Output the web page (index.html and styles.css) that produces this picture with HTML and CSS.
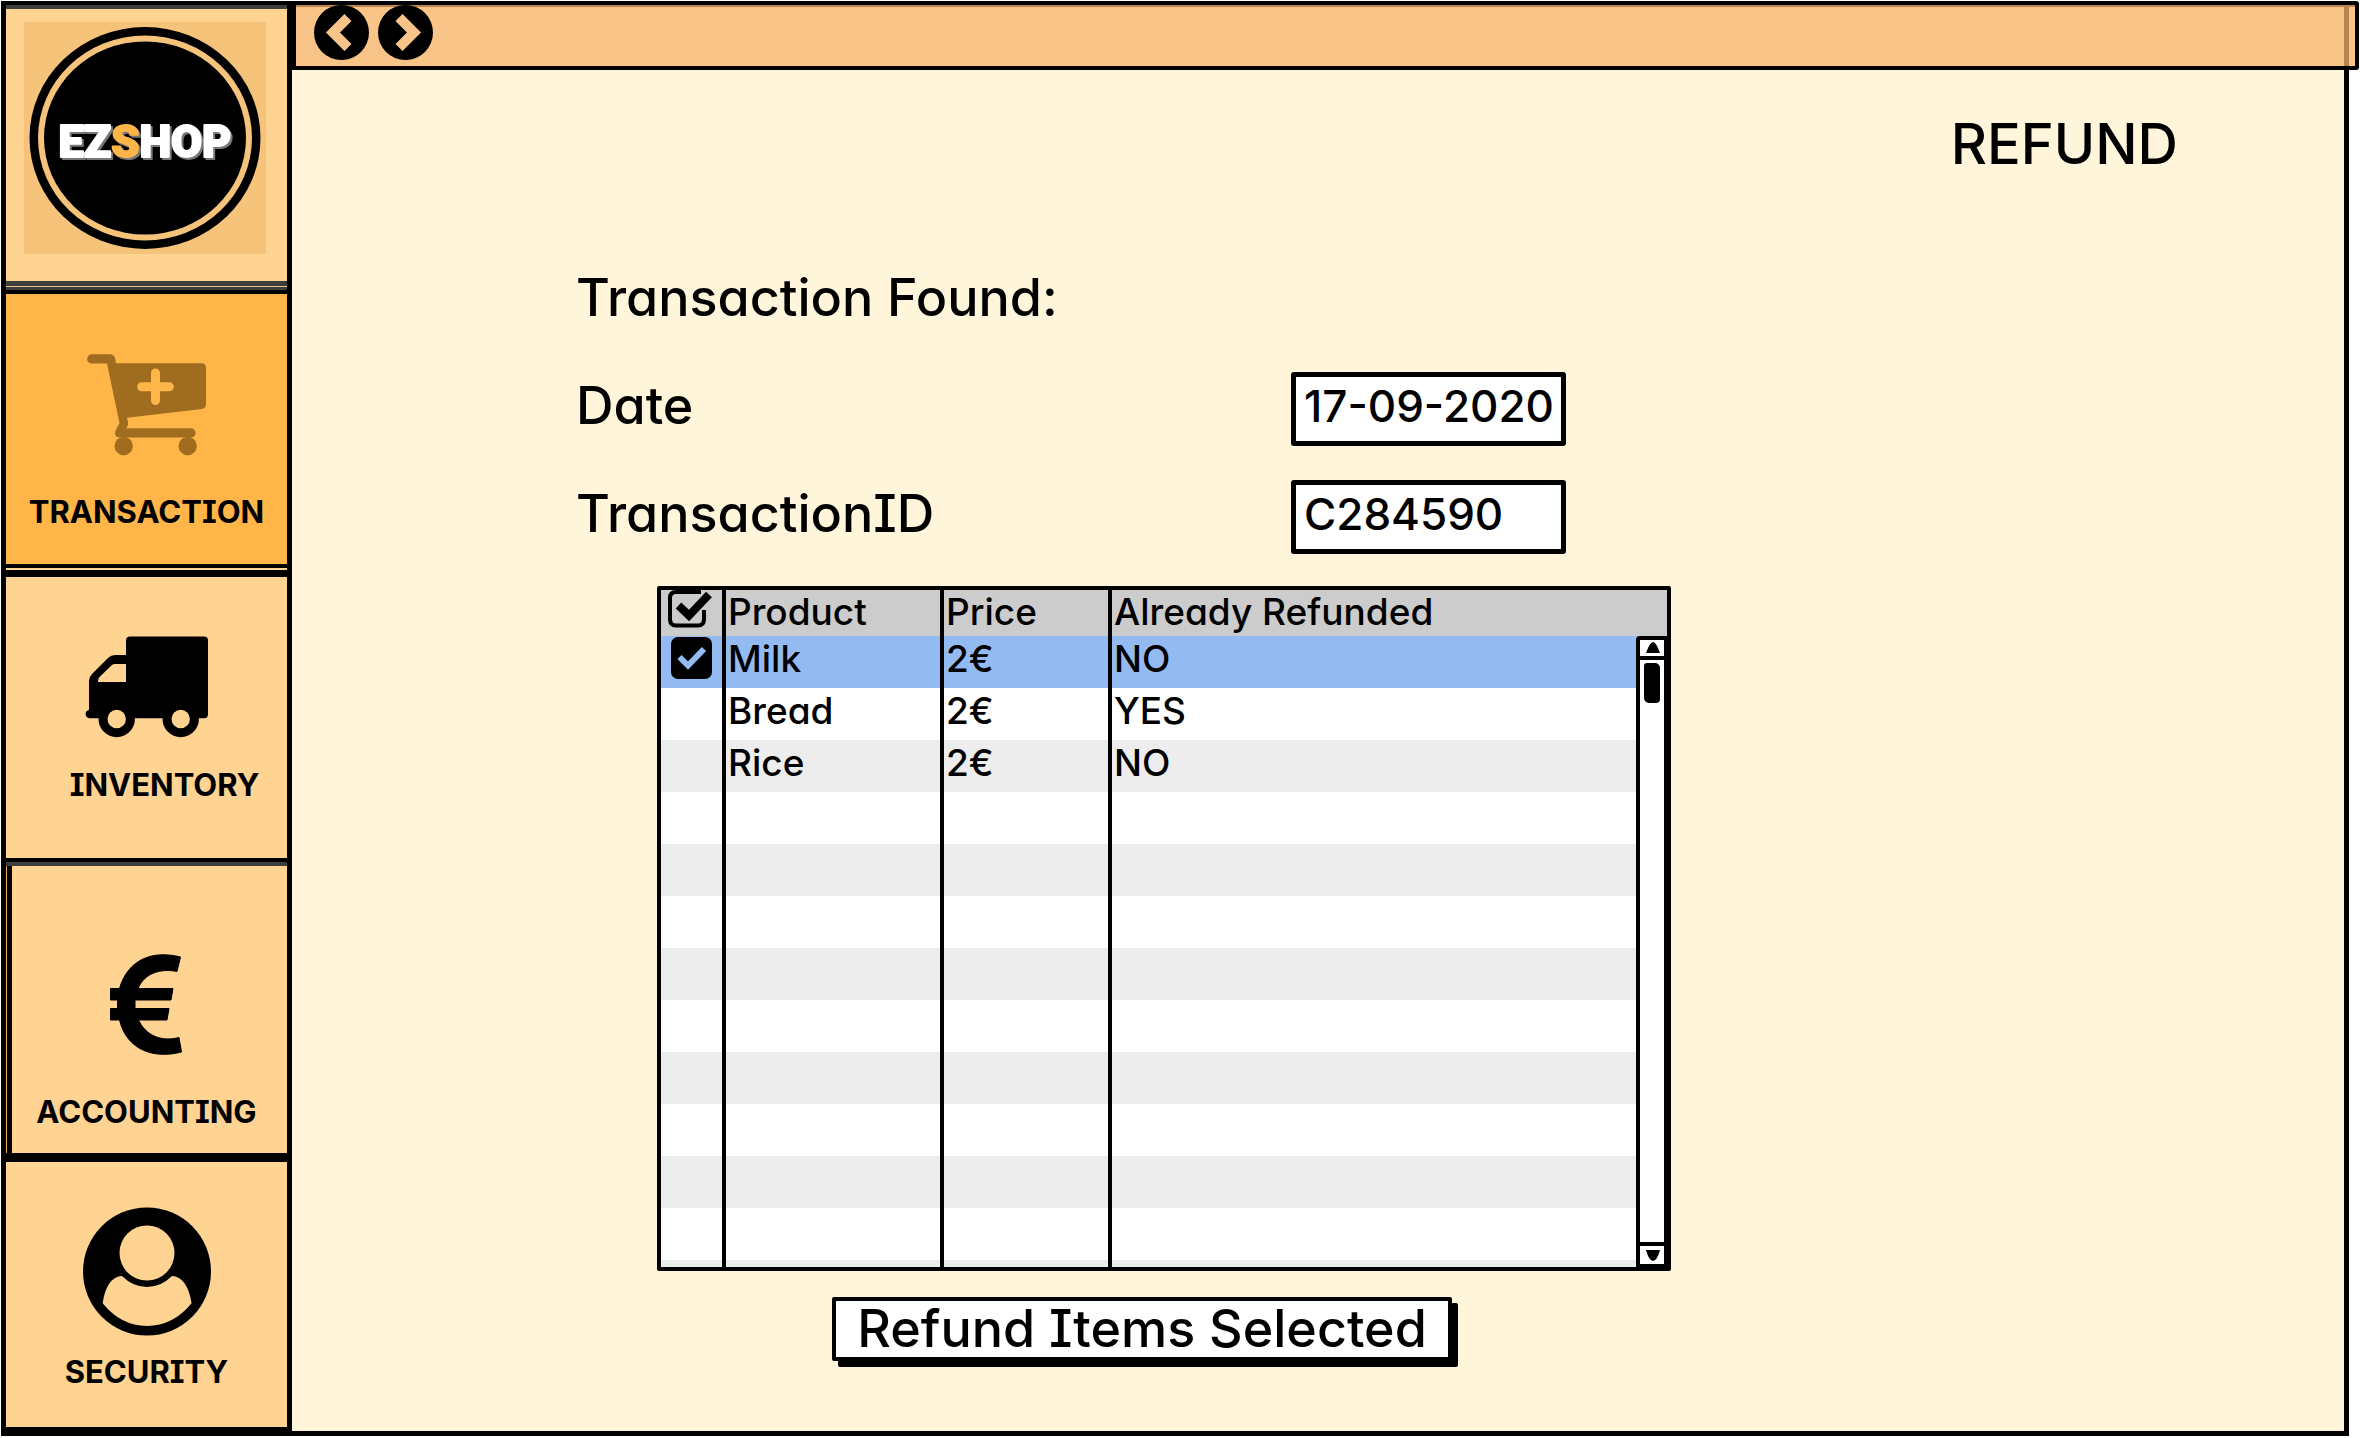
FILE: index.html
```html
<!DOCTYPE html>
<html lang="en">
<head>
<meta charset="utf-8">
<meta name="viewport" content="width=device-width, initial-scale=1">
<title>EZShop - Refund</title>
<link rel="stylesheet" href="styles.css">
</head>
<body>
<div class="app">
  <nav class="sidebar" aria-label="Sections">
    <a class="tile tile-logo" href="#home">
      <svg class="logo" viewBox="0 0 242 232" role="img" aria-label="EZShop">
        <rect width="242" height="232" fill="#f5c37a"/>
        <ellipse cx="121" cy="116" rx="115.5" ry="111" fill="#000"/>
        <ellipse cx="121" cy="116" rx="107" ry="102.5" fill="#f5c37a"/>
        <ellipse cx="121" cy="116" rx="101" ry="96.5" fill="#000"/>
        <text class="logo-text" x="121" y="135" text-anchor="middle">EZ<tspan class="logo-accent">S</tspan>HOP</text>
      </svg>
    </a>
    <a class="tile tile-transaction" href="#transaction" aria-current="page">
      <svg width="120" height="102" viewBox="0 0 120 102" aria-hidden="true">
        <g fill="#a06c20">
          <path d="M4.7 .3H22Q28 .3 28.5 6L29 9.3H114.5Q119 9.3 119 14V50Q119 54.500 115 55L40 63.700 41 68Q41.500 72 39 74.300H104A4.600 4.600 0 0 1 104 83.500H32Q28 83 28 79 28 77 32.500 69L20 9.500H4.700A4.600 4.600 0 0 1 4.700 .3Z"/>
          <circle cx="36.700" cy="92" r="9.200"/>
          <circle cx="100.700" cy="92" r="9.200"/>
        </g>
        <path d="M68.500 19V46.500M54.700 32.700H82.300" stroke="#ffb548" stroke-width="9" stroke-linecap="round"/>
      </svg>
      <span class="tile-label">TRANSACTION</span>
    </a>
    <a class="tile tile-inventory" href="#inventory">
      <svg width="123" height="102" viewBox="0 0 123 102" aria-hidden="true">
        <path d="M45 .5H119Q123 .5 123 4.500V78Q123 82.300 119 82.300H4.500A4.200 4.200 0 0 1 4 74V45Q4 41 7 38L23 22Q26 19 31 19H41V4.500Q41 .5 45 .5Z"/>
        <circle cx="31.700" cy="83" r="18.200"/>
        <circle cx="95.700" cy="83" r="18.200"/>
        <g fill="#ffd391">
          <path d="M41 28H30Q28 28 27 29L14.500 41Q13 42.500 13 46H41Z"/>
          <circle cx="31.700" cy="83" r="9.200"/>
          <circle cx="95.700" cy="83" r="9.200"/>
        </g>
      </svg>
      <span class="tile-label">INVENTORY</span>
    </a>
    <a class="tile tile-accounting" href="#accounting">
      <svg width="73" height="102" viewBox="0 0 73 102" aria-hidden="true">
        <path stroke="#000" stroke-width="1" stroke-linejoin="round" d="M70.500 3 67 17.500C52 14.500 35 18 28 34.500H63L61 46H25V54.500H59L57 66H28.500C36 82 52 88 69 83.500L71.500 98C45 105 17 97 9.500 66H.5V54.500H7.500V46H.5V34.500H9.500C18 5 43 -4 70.500 3Z"/>
      </svg>
      <span class="tile-label">ACCOUNTING</span>
    </a>
    <a class="tile tile-security" href="#security">
      <svg width="128" height="129" viewBox="0 0 128 129" aria-hidden="true">
        <circle cx="64" cy="64.500" r="64"/>
        <g fill="#ffd391">
          <circle cx="64" cy="46" r="27.500"/>
          <path d="M19.700 96.300C22 79 29 69.500 39 69Q50 80 64 80 78 80 89 69C99 69.500 106 79 108.600 96.300Q90 119 64 119 38 119 19.700 96.300Z"/>
        </g>
      </svg>
      <span class="tile-label">SECURITY</span>
    </a>
  </nav>

  <div class="page">
    <header class="topbar">
      <button class="round-button" type="button" aria-label="Back">
        <svg width="55" height="55" viewBox="0 0 55 55" aria-hidden="true"><circle cx="27.500" cy="27.500" r="27.500"/><path d="M34 12.500 19 27.500 34 42.500"/></svg>
      </button>
      <button class="round-button" type="button" aria-label="Forward">
        <svg width="55" height="55" viewBox="0 0 55 55" aria-hidden="true"><circle cx="27.500" cy="27.500" r="27.500"/><path d="M21 12.500 36 27.500 21 42.500"/></svg>
      </button>
    </header>

    <main class="content">
      <h1 class="title">REFUND</h1>
      <form class="refund">
        <h2 class="line">Transaction Found:</h2>
        <div class="field">
          <label class="line" for="date">Date</label>
          <input class="box" id="date" type="text" value="17-09-2020">
        </div>
        <div class="field">
          <label class="line" for="tid">TransactionID</label>
          <input class="box" id="tid" type="text" value="C284590">
        </div>

        <div class="list">
          <table class="items">
            <colgroup><col class="col-check"><col class="col-product"><col class="col-price"><col></colgroup>
            <thead>
              <tr>
                <th class="mark">
                  <button class="select-all" type="button" aria-label="Select all">
                    <svg width="46" height="38" viewBox="0 0 46 38" aria-hidden="true">
                      <path d="M33 2H8Q2 2 2 8V29Q2 35.500 8 35.500H30Q36 35.500 36 29V20" fill="none" stroke="#000" stroke-width="4"/>
                      <path d="M10.500 15.500 21 25.500 41 4.500" fill="none" stroke="#000" stroke-width="8"/>
                    </svg>
                  </button>
                </th>
                <th>Product</th><th>Price</th><th>Already Refunded</th>
              </tr>
            </thead>
            <tbody>
              <tr class="selected">
                <td class="mark">
                  <span class="tick">
                    <input type="checkbox" checked aria-label="Refund Milk">
                    <svg width="41" height="42" viewBox="0 0 41 42" aria-hidden="true"><path d="M8.500 20 17 28.500 33 12" fill="none" stroke="#94baf2" stroke-width="6"/></svg>
                  </span>
                </td>
                <td>Milk</td><td>2€</td><td>NO</td>
              </tr>
              <tr><td></td><td>Bread</td><td>2€</td><td>YES</td></tr>
              <tr><td></td><td>Rice</td><td>2€</td><td>NO</td></tr>
              <tr><td></td><td></td><td></td><td></td></tr>
              <tr><td></td><td></td><td></td><td></td></tr>
              <tr><td></td><td></td><td></td><td></td></tr>
              <tr><td></td><td></td><td></td><td></td></tr>
              <tr><td></td><td></td><td></td><td></td></tr>
              <tr><td></td><td></td><td></td><td></td></tr>
              <tr><td></td><td></td><td></td><td></td></tr>
              <tr><td></td><td></td><td></td><td></td></tr>
              <tr><td></td><td></td><td></td><td></td></tr>
              <tr class="partial"><td></td><td></td><td></td><td></td></tr>
            </tbody>
          </table>
          <div class="scrollbar" aria-hidden="true">
            <svg class="arrow" width="24" height="16" viewBox="0 0 24 16"><path d="M6 13Q10 2 13 2 16 2 20 13Z"/></svg>
            <div class="track"><div class="thumb"></div></div>
            <svg class="arrow" width="24" height="18" viewBox="0 0 24 18"><path d="M6 4H20Q17 15 13 15 9 15 6 4Z"/></svg>
          </div>
        </div>

        <button class="submit" type="submit">Refund Items Selected</button>
      </form>
    </main>
  </div>
</div>
</body>
</html>
```
FILE: styles.css
```css
* {
  box-sizing: border-box;
}

body {
  margin: 0;
  background: #fff;
  color: #000;
  font-family: Inter, "Liberation Sans", sans-serif;
  font-weight: 500;
  /* single-storey a, capital I with serifs */
  font-feature-settings: "cv11", "cv08";
}

.app {
  display: grid;
  grid-template-columns: 291px 1fr;
  min-height: 100vh;
  padding: 1px 0 2px 1px;
}

/* Sidebar */

.sidebar {
  display: grid;
  grid-template-rows: 289fr 278fr 290fr 295fr 283fr;
  border: solid #000;
  border-width: 0 5px;
  background: #ffd391;
}

.tile {
  display: flex;
  flex-direction: column;
  align-items: center;
  color: #000;
  text-decoration: none;
  border: 0 solid #000;
}

.tile-logo {
  border-top-width: 4px;
  padding: 17px 21px 26px 18px;
  box-shadow: inset 0 4px #3d3d3d, inset 0 -3px #3d3d3d, inset 0 -4px #e8c389, inset 0 -9px #3d3d3d;
}

.logo {
  width: 100%;
  max-width: 242px;
}

.logo-text {
  font: 900 45px Roboto, sans-serif;
  fill: #fff;
  stroke: #fff;
  stroke-width: 2px;
  stroke-linejoin: round;
  filter: drop-shadow(2px 2px 0 #777);
}

.logo-accent {
  fill: #ffb548;
  stroke: #ffb548;
}

.tile-transaction {
  border-width: 4px 0;
  padding-top: 60px;
  gap: 40px;
  background: #ffb548;
}

.tile-inventory {
  margin-top: 2px;
  border-top-width: 7px;
  padding-top: 59px;
  gap: 31px;
}

.tile-inventory .tile-label {
  margin-left: 36px;
}

.tile-accounting {
  border-top-width: 4px;
  padding-top: 92px;
  gap: 40px;
  box-shadow: inset 0 4px #3d3d3d, inset 1px 0 #e8a94a, inset 6px 0 #000;
}

.tile-security {
  border-width: 9px 0;
  padding-top: 45px;
  gap: 20px;
}

.tile-label {
  font-size: 31px;
  font-weight: 700;
  line-height: 32px;
}

/* Top bar */

.page {
  display: flex;
  flex-direction: column;
}

.topbar {
  display: flex;
  gap: 9px;
  height: 69px;
  padding-left: 18px;
  margin-right: 1px;
  border: 4px solid #000;
  border-radius: 0 3px 3px 0;
  background: linear-gradient(#b88450, #b88450) right 6px top / 5px 100% no-repeat, #f9c487;
  box-shadow: inset 0 2px #b88450;
}

.round-button {
  width: 55px;
  height: 55px;
  padding: 0;
  border: 0;
  border-radius: 50%;
  background: none;
}

.round-button svg {
  display: block;
}

.round-button path {
  fill: none;
  stroke: #f9c487;
  stroke-width: 10px;
}

/* Content */

.content {
  flex: 1;
  margin-right: 11px;
  padding: 42px 166px 60px 284px;
  border: solid #000;
  border-width: 0 5px 5px 0;
  background: #fff5da;
}

.title {
  margin: 0;
  font-size: 56px;
  font-weight: 500;
  line-height: 64px;
  text-align: right;
}

.refund {
  display: flex;
  flex-direction: column;
  align-items: flex-start;
  max-width: 1095px;
  margin-top: 68px;
}

.line {
  margin: 0;
  font-size: 52px;
  font-weight: 500;
  line-height: 108px;
}

.field {
  display: flex;
  align-items: center;
  justify-content: space-between;
  width: 100%;
  max-width: 990px;
}

.box {
  width: 275px;
  height: 74px;
  margin: 6px 0 0;
  padding: 0 0 6px 8px;
  border: 5px solid #000;
  border-radius: 3px;
  background: #fff;
  color: #000;
  font: inherit;
  font-feature-settings: inherit;
  font-size: 44px;
}

.list {
  position: relative;
  align-self: flex-end;
  width: 1014px;
  max-width: 100%;
  margin-top: 18px;
  border: 4px solid #000;
  border-radius: 2px;
}

.items {
  width: 100%;
  table-layout: fixed;
  border-spacing: 0;
  background: #fff;
  font-size: 37px;
}

.col-check {
  width: 65px;
}

.col-product {
  width: 218px;
}

.col-price {
  width: 168px;
}

.items th,
.items td {
  height: 52px;
  padding: 0 0 6px 2px;
  border-right: 4px solid #000;
  font-weight: 500;
  line-height: 44px;
  text-align: left;
}

.items th {
  height: 46px;
  padding-bottom: 2px;
  background: #ccc;
  line-height: 40px;
}

.items th:last-child,
.items td:last-child {
  border-right: 0;
}

.items tbody tr:nth-child(odd) {
  background: #ededed;
}

.items tbody .selected:nth-child(odd) {
  background: #94baf2;
}

.items .partial td {
  height: 7px;
  padding: 0;
}

.items .mark {
  padding: 0 0 0 7px;
  line-height: 0;
  vertical-align: top;
}

.select-all {
  padding: 0;
  border: 0;
  background: none;
}

.select-all svg {
  display: block;
}

.tick {
  position: relative;
  display: block;
  width: 41px;
  height: 42px;
  margin: 1px 0 0 3px;
}

.tick input {
  width: 100%;
  height: 100%;
  margin: 0;
  border-radius: 7px;
  background: #000;
  appearance: none;
}

.tick svg {
  position: absolute;
  inset: 0;
  pointer-events: none;
}

.scrollbar {
  position: absolute;
  top: 46px;
  right: 0;
  bottom: 0;
  display: flex;
  flex-direction: column;
  width: 31px;
  border: solid #000;
  border-width: 4px 3px 3px 4px;
  border-radius: 4px 0 0 0;
  background: #fff;
}

.arrow {
  display: block;
}

.track {
  flex: 1;
  padding: 3px 4px;
  border: solid #000;
  border-width: 4px 0;
}

.thumb {
  height: 40px;
  border-radius: 3px 5px 4px 5px;
  background: #000;
}

.submit {
  width: 620px;
  max-width: 100%;
  height: 64px;
  margin: 26px 0 0 256px;
  padding: 0;
  border: 4px solid #000;
  border-radius: 2px;
  background: #fff;
  box-shadow: 6px 6px 0 #000;
  color: #000;
  font: inherit;
  font-feature-settings: inherit;
  font-size: 52px;
  line-height: 56px;
}
```
